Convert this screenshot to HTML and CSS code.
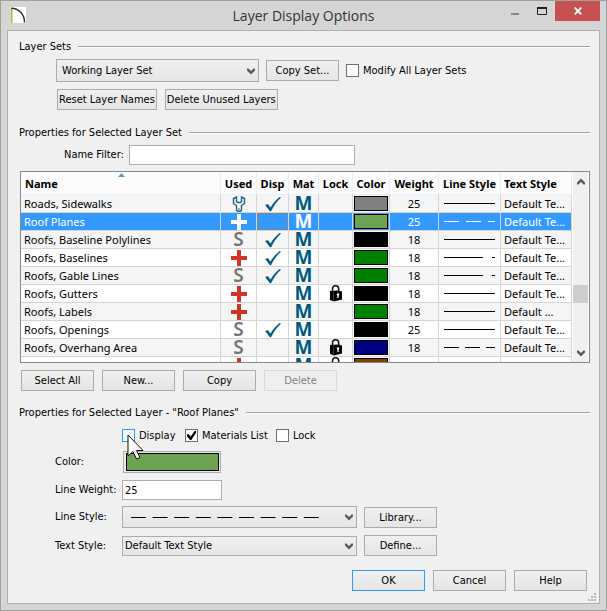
FILE: index.html
```html
<!DOCTYPE html>
<html lang="en">
<head>
<meta charset="utf-8">
<title>Layer Display Options</title>
<link rel="stylesheet" href="styles.css">
</head>
<body>
<svg width="0" height="0" class="defs" aria-hidden="true">
  <symbol id="chevron" viewBox="0 0 8 7"><path d="M0 0.500L1.500 0.500L4 3L6.500 0.500L8 0.500V2.500L4 6.500L0 2.500Z" fill="#5a5a5a"/></symbol>
  <symbol id="tick" viewBox="0 0 16 15"><path d="M0.500 8.500L3 8L5.500 11.500C8 7 11 3.500 15 0.500L15.500 1.200C11.500 5 8.500 9 6 14.500H5Z" fill="#00597f" stroke="#00597f" stroke-width="0.500"/></symbol>
  <symbol id="plus" viewBox="0 0 16 16"><path d="M6 0H10V6H16V10H10V16H6V10H0V6H6Z" fill="currentColor"/></symbol>
  <symbol id="wrench" viewBox="0 0 14 16"><path d="M4.500 1L1.500 2.500V7.500L4.500 9.500V14L5.500 15.200H8.500L9.500 14V9.500L12.500 7.500V2.500L9.500 1V5.500L8.500 6.500H5.500L4.500 5.500Z" fill="none" stroke="#1f6484" stroke-width="1.400"/><path d="M7 12.300V13.800" stroke="#1f6484" stroke-width="1.200"/></symbol>
  <symbol id="lock" viewBox="0 0 14 17"><path d="M3.500 7V4C3.500-0.200 9.700-0.200 9.700 4V6" fill="none" stroke="#111" stroke-width="1.500"/><path d="M1 6L9 5.500L13 6.500V14.500L5 16.500L1 15Z" fill="#000"/><path d="M4.500 7V16" stroke="#555" stroke-width="0.600"/><path d="M9 9.500V13" stroke="#fff" stroke-width="1.300"/><circle cx="9" cy="9.500" r="1.200" fill="#fff"/></symbol>
</svg>
<main class="window">
  <header class="titlebar">
    <svg class="app-icon" viewBox="0 0 16 16" aria-hidden="true"><rect width="16" height="16" fill="#fff"/><path d="M1.500 2V16" stroke="#9bc53d" stroke-width="2"/><path d="M1 1.200C9 1.200 14.500 7.500 14.500 15.500" fill="none" stroke="#333" stroke-width="1.500"/></svg>
    <h1>Layer Display Options</h1>
    <div class="caption">
      <button class="cap" aria-label="Minimize"><svg width="8" height="12" viewBox="0 0 8 12"><path d="M0 9H8" stroke="#888" stroke-width="2"/></svg></button>
      <button class="cap" aria-label="Maximize"><svg width="10" height="8" viewBox="0 0 10 8"><path d="M0.500 0V7.500H9.500V0" fill="none" stroke="#222"/><path d="M0 1H10" stroke="#222" stroke-width="2"/></svg></button>
      <button class="cap close" aria-label="Close"><svg width="8" height="8" viewBox="0 0 8 8"><path d="M0.700 0.700L7.300 7.300M7.300 0.700L0.700 7.300" stroke="#fff" stroke-width="1.800"/></svg></button>
    </div>
  </header>

  <div class="client">
    <section class="sets">
      <h2>Layer Sets</h2>
      <div class="row">
        <span class="combo set"><select aria-label="Layer set"><option>Working Layer Set</option></select><svg class="chev"><use href="#chevron"/></svg></span>
        <button class="btn">Copy Set...</button>
        <label class="check"><input type="checkbox">Modify All Layer Sets</label>
      </div>
      <div class="row reset">
        <button class="btn fit">Reset Layer Names</button>
        <button class="btn fit">Delete Unused Layers</button>
      </div>
    </section>

    <section class="layers">
      <h2>Properties for Selected Layer Set</h2>
      <div class="filter"><label for="filter">Name Filter:</label><input id="filter" class="field" type="text"></div>
      <div class="list">
        <div class="viewport">
        <table>
          <colgroup><col><col class="c-used"><col class="c-disp"><col class="c-mat"><col class="c-lock"><col class="c-color"><col class="c-weight"><col class="c-line"><col class="c-text"></colgroup>
          <thead><tr><th class="name">Name<svg class="sort" viewBox="0 0 7 4"><path d="M0 4L3.500 0L7 4Z" fill="#5b9cbd"/></svg></th><th>Used</th><th>Disp</th><th>Mat</th><th>Lock</th><th>Color</th><th>Weight</th><th>Line Style</th><th class="left">Text Style</th></tr></thead>
          <tbody id="rows"></tbody>
        </table>
        </div>
        <div class="scroll">
          <button aria-label="Scroll up"><svg class="chev up"><use href="#chevron"/></svg></button>
          <div class="track"><div class="thumb"></div></div>
          <button aria-label="Scroll down"><svg class="chev"><use href="#chevron"/></svg></button>
        </div>
      </div>
      <div class="row actions">
        <button class="btn">Select All</button>
        <button class="btn">New...</button>
        <button class="btn">Copy</button>
        <button class="btn" disabled>Delete</button>
      </div>
    </section>

    <section class="props">
      <h2>Properties for Selected Layer - "Roof Planes"</h2>
      <div class="checks">
        <label class="check hot"><input type="checkbox">Display<svg class="pointer" viewBox="0 0 17 26"><path d="M1 1V22L6 17.500L9.500 25L13 23.500L9.500 16.500H16Z" fill="#fff" stroke="#111"/></svg></label>
        <label class="check"><input type="checkbox" checked>Materials List</label>
        <label class="check"><input type="checkbox">Lock</label>
      </div>
      <div class="form color"><label for="color">Color:</label><button id="color" class="well"><span></span></button></div>
      <div class="form weight"><label for="weight">Line Weight:</label><input id="weight" class="field" type="text" value="25"></div>
      <div class="form style"><label for="line">Line Style:</label><span class="combo"><select id="line"><option></option></select><svg class="dashes" viewBox="0 0 190 1"><path d="M0 0.500H190" stroke="#000" stroke-dasharray="15 6.600"/></svg><svg class="chev"><use href="#chevron"/></svg></span><button class="btn">Library...</button></div>
      <div class="form text"><label for="text">Text Style:</label><span class="combo"><select id="text"><option>Default Text Style</option></select><svg class="chev"><use href="#chevron"/></svg></span><button class="btn">Define...</button></div>
    </section>

    <footer class="row">
      <button class="btn default">OK</button>
      <button class="btn">Cancel</button>
      <button class="btn">Help</button>
    </footer>
    <svg class="grip" viewBox="0 0 8 8" aria-hidden="true"><path d="M6 1H8M3 4H5M6 4H8M0 7H2M3 7H5M6 7H8" stroke="#b8b8b8" stroke-width="2"/></svg>
  </div>
</main>
<script src="layers.js"></script>
</body>
</html>
```
FILE: layers.js
```js
// name, used icon, display, lock, color, weight, dash pattern, text style
const layers = [
  ["Roads, Sidewalks", "wrench", 1, 0, "#808080", 25, "", "Default Te..."],
  ["Roof Planes", "plus", 0, 0, "#6ca352", 25, "15 7", "Default Te..."],
  ["Roofs, Baseline Polylines", "S", 1, 0, "#000000", 18, "", "Default Te..."],
  ["Roofs, Baselines", "plus", 1, 0, "#008000", 18, "39 9", "Default Te..."],
  ["Roofs, Gable Lines", "S", 1, 0, "#008000", 18, "39 9", "Default Te..."],
  ["Roofs, Gutters", "plus", 0, 1, "#000000", 18, "", "Default Te..."],
  ["Roofs, Labels", "plus", 0, 0, "#008000", 18, "", "Default ..."],
  ["Roofs, Openings", "S", 1, 0, "#000000", 25, "", "Default Te..."],
  ["Roofs, Overhang Area", "S", 0, 1, "#000080", 18, "15 6", "Default Te..."],
  ["Roofs, Ridge Caps", "plus", 0, 1, "#804000", 18, "", "Default Te..."]
];
const icon = (id) => `<svg class="icon ${id}"><use href="#${id}"/></svg>`;
document.getElementById("rows").innerHTML = layers.map((l, i) => `
<tr${i === 1 ? ' class="selected"' : ""}>
<td class="name">${l[0]}</td>
<td>${l[1] === "S" ? '<b class="glyph s">S</b>' : icon(l[1])}</td>
<td>${l[2] ? icon("tick") : '<span class="focus"></span>'}</td>
<td><b class="glyph">M</b></td>
<td>${l[3] ? icon("lock") : ""}</td>
<td class="swatch"><span style="background:${l[4]}"></span></td>
<td>${l[5]}</td>
<td><svg class="line" viewBox="0 0 51 1"><path d="M0 0.5H51" stroke="currentColor" stroke-dasharray="${l[6] || "none"}"/></svg></td>
<td class="left">${l[7]}</td>
</tr>`).join("");
```
FILE: styles.css
```css
* { box-sizing: border-box; }
body { margin: 0; background: #d5d5d5; color: #000; font: 11px/16px "DejaVu Sans Condensed", "DejaVu Sans", sans-serif; }
h1, h2 { margin: 0; font-weight: 400; }
button, input, select { font: inherit; color: inherit; margin: 0; }
.defs { position: absolute; }

.window { min-height: 100vh; border: 1px solid #9f9f9f; padding: 0 6px 6px; background: #d5d5d5; display: flex; flex-direction: column; }
.titlebar { display: grid; grid-template-columns: 1fr auto 1fr; height: 29px; }
.titlebar h1 { font: 14px/29px "Open Sans", sans-serif; color: #333; }
.app-icon { width: 16px; height: 16px; margin: 6px 0 0 3px; }
.caption { display: flex; justify-content: flex-end; height: 20px; }
.cap { width: 27px; border: 0; padding: 0; background: none; display: grid; place-items: center; }
.cap.close { width: 45px; background: #c75050; }

.client { position: relative; flex: 1; border: 1px solid #b0b0b0; background: #f0f0f0; padding: 8px 9px 11px 11px; }
h2 { display: flex; align-items: center; gap: 7px; font-size: 11px; line-height: 16px; }
h2::after { content: ""; flex: 1; height: 2px; background: linear-gradient(#a0a0a0 50%, #fff 50%); }
.row { display: flex; align-items: center; gap: 8px; }

.btn { width: 73px; height: 21px; padding: 0; border: 1px solid #acacac; background: linear-gradient(#f0f0f0, #e5e5e5); line-height: 19px; white-space: nowrap; text-align: center; }
.btn.fit { width: auto; padding: 0 1px; }
.btn.default { border-color: #3399ff; }
.btn:disabled { color: #838383; border-color: #d9d9d9; background: #efefef; }
.combo { position: relative; display: block; }
.combo select { display: block; appearance: none; width: 100%; height: 100%; padding: 0 20px 0 2px; border: 1px solid #acacac; border-radius: 0; background: linear-gradient(#f0f0f0, #e5e5e5); }
.chev { width: 8px; height: 7px; display: block; }
.combo .chev { position: absolute; right: 4px; top: 50%; margin-top: -3px; pointer-events: none; }
.field { border: 1px solid #abadb3; background: #fff; padding: 0 2px; height: 20px; }
.check { position: relative; display: flex; align-items: center; gap: 4px; white-space: nowrap; }
.check input { appearance: none; width: 13px; height: 13px; border: 1px solid #707070; background: #fff; }
.check input:checked::before { content: ""; display: block; width: 9px; height: 9px; margin: 1px; background: #000; clip-path: polygon(0 35%, 20% 35%, 42% 60%, 85% 0, 100% 0, 100% 20%, 48% 100%, 35% 100%, 0 60%); }
.check.hot input { border-color: #3399ff; background: #f3f9ff; }

.sets .row { margin: 4px 0 0 37px; gap: 7px; }
.sets .set { width: 203px; height: 23px; }
.sets .set select { padding-left: 5px; }
.sets .reset { margin: 7px 0 0 38px; gap: 8px; }
.layers { margin-top: 15px; }
.filter { display: flex; align-items: center; margin: 4px 0 6px 45px; gap: 5px; }
.filter .field { width: 226px; }
.list { display: flex; height: 192px; margin-left: 1px; border: 1px solid #828790; background: #fff; font-family: "Noto Sans", sans-serif; }
.viewport { flex: 1; overflow: hidden; }
.scroll { width: 17px; padding: 0 1px; background: #fff; display: flex; flex-direction: column; }
.scroll button { border: 0; padding: 0; height: 18px; background: #f0f0f0; display: grid; place-items: center; }
.up { transform: rotate(180deg); }
.track { flex: 1; background: #f0f0f0; padding-top: 95px; }
.thumb { height: 18px; background: #cdcdcd; }
table { width: 100%; table-layout: fixed; border-collapse: separate; border-spacing: 0; }
.c-used { width: 36px; } .c-disp { width: 32px; } .c-mat { width: 30px; } .c-lock { width: 34px; } .c-color { width: 37px; }
.c-weight { width: 49px; } .c-line { width: 62px; } .c-text { width: 71px; }
th { position: relative; height: 23px; padding: 1px 0 0; background: #fcfcfc; border: solid #e4effb; border-width: 0 1px 1px 0; line-height: 20px; white-space: nowrap; }
td { height: 18px; padding: 0; border: solid #d5d5d5; border-width: 0 1px 1px 0; line-height: 17px; text-align: center; white-space: nowrap; }
tr:nth-child(odd) td { background: #f5f5f5; }
tr.selected td { background: #3399ff; color: #fff; }
tr .name, tr .left { text-align: left; padding-left: 3px; }
th.name { padding-left: 4px; }
.sort { position: absolute; left: 97px; top: 1px; width: 7px; height: 4px; }
.icon { display: block; margin: 0 auto; color: #d03526; width: 16px; height: 16px; }
.wrench { width: 14px; }
.lock { height: 17px; }
.selected .icon { color: #fff; }
.focus { display: block; height: 17px; }
.selected .focus { border: 1px dotted #b8742c; }
.glyph { display: block; height: 17px; font: 700 19px/17px "Noto Sans", sans-serif; color: #00597f; }
.glyph.s { color: #757575; font-weight: 600; }
.selected .glyph { color: #fff; }
.swatch span { display: block; height: 15px; margin: 0 1px; border: 1px solid #000; }
.line { display: block; width: 51px; height: 1px; margin: 0 auto; }
.actions { margin: 7px 0 0 2px; }

.props { margin-top: 14px; }
.checks { display: grid; grid-template-columns: 63px 91px auto; margin: 7px 0 0 103px; line-height: 15px; }
.pointer { position: absolute; left: 5px; top: 6px; width: 17px; height: 26px; }
.form { display: grid; grid-template-columns: 67px 235px 73px; align-items: center; margin-left: 36px; }
.form .btn { margin-left: 7px; }
.color { margin-top: 8px; }
.well { width: 98px; height: 22px; margin-left: 1px; padding: 1px 1px 1px 2px; border: 1px solid #acacac; background: #ebebeb; }
.well span { display: block; height: 18px; border: 1px solid #000; background: #6ca352; }
.weight { margin-top: 7px; }
.weight .field { width: 100px; }
.style { margin-top: 6px; }
.style .combo { height: 22px; }
.dashes { position: absolute; left: 9px; top: 11px; width: 190px; height: 1px; }
.text { margin-top: 7px; }
.text .combo { height: 20px; }
footer.row { margin-top: 14px; padding-right: 3px; justify-content: flex-end; }
.grip { position: absolute; right: 3px; bottom: 2px; width: 8px; height: 8px; }
```
